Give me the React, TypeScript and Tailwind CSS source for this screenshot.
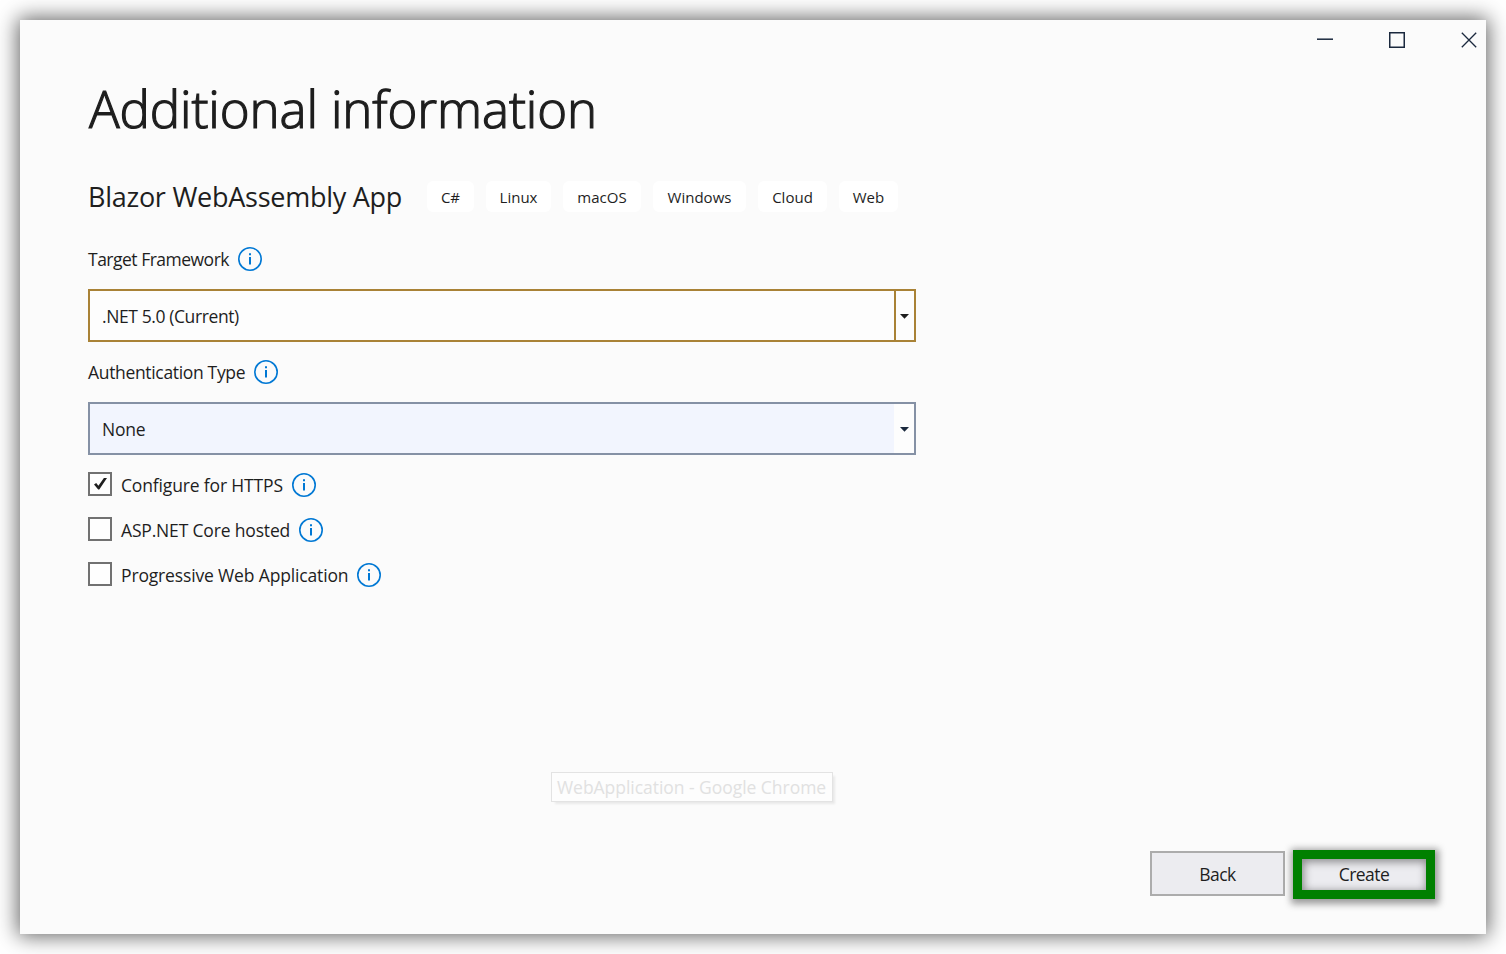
import type { ReactNode } from 'react';

function InfoIcon() {
  return (
    <svg className="size-6 shrink-0" viewBox="0 0 24 24" fill="none">
      <circle cx="12" cy="12" r="11.2" stroke="#0078d4" strokeWidth="1.6" />
      <path d="M11 6.3h2v2h-2zM11 10h2v7.6h-2z" fill="#0078d4" />
    </svg>
  );
}

function Caret({ className }: { className: string }) {
  return (
    <svg className="h-[5px] w-[9px]" viewBox="0 0 9 5">
      <path d="M0 0h9L4.5 4.7z" className={className} />
    </svg>
  );
}

function Label({ width, children }: { width: string; children: ReactNode }) {
  return (
    <div className="flex h-6 items-center gap-[9px]">
      <span className={width}>{children}</span>
      <InfoIcon />
    </div>
  );
}

function CheckRow({ checked = false, width, children }: { checked?: boolean; width: string; children: ReactNode }) {
  return (
    <div className="flex h-[25px] gap-[9px]">
      <div className="flex size-6 items-center justify-center border-2 border-[#717171] bg-[#fefefe]">
        {checked && (
          <svg className="size-5 shrink-0" viewBox="0 0 20 20">
            <path d="M4 10.6l2.2-1.6 2.2 2.8L13.9 4H17L9.3 15.6H8.2z" fill="#1e1e1e" />
          </svg>
        )}
      </div>
      <div className="pt-px">
        <Label width={width}>{children}</Label>
      </div>
    </div>
  );
}

const tags = [
  { name: 'C#', width: 'w-[47px]' },
  { name: 'Linux', width: 'w-[65px]' },
  { name: 'macOS', width: 'w-[78px]' },
  { name: 'Windows', width: 'w-[93px]' },
  { name: 'Cloud', width: 'w-[69px]' },
  { name: 'Web', width: 'w-[59px]' },
];

export default function App() {
  return (
    <div className="h-[954px] w-full overflow-hidden bg-white p-5 font-['Open_Sans','Noto_Sans',sans-serif] text-[17.5px] leading-6 whitespace-nowrap text-[#1e1e1e]">
      <div className="relative flex h-[914px] w-[1466px] flex-col bg-[#fbfbfb] shadow-[0_0_20px_2px_rgba(0,0,0,0.62)]">
        <div className="flex h-10 items-center justify-end gap-14 pr-[9px]">
          <svg className="h-4 w-4" viewBox="0 0 16 16">
            <path d="M0 7.2h16" stroke="#1b293e" strokeWidth="1.5" />
          </svg>
          <svg className="h-4 w-4" viewBox="0 0 16 16" fill="none">
            <path d="M.75.75h14.5v14.5H.75z" stroke="#1b293e" strokeWidth="1.5" />
          </svg>
          <svg className="h-4 w-4" viewBox="0 0 16 16">
            <path d="M.8.8l14.4 14.4M15.2.8L.8 15.2" stroke="#1b293e" strokeWidth="1.3" />
          </svg>
        </div>

        <main className="flex flex-col pt-[18px] pl-[68px]">
          <h1 className="h-[60px] pl-px text-[51px] leading-[60px] font-light tracking-[-0.12px] [-webkit-text-stroke:1.2px_#1e1e1e]">
            Additional information
          </h1>

          <div className="mt-[43px] flex h-[31px] items-center">
            <h2 className="w-[339px] text-[27px] leading-[31px] tracking-[-0.26px]">Blazor WebAssembly App</h2>
            <ul className="flex gap-3">
              {tags.map((t) => (
                <li key={t.name} className={`flex h-[31px] items-center justify-center rounded-md bg-white text-[15px] ${t.width}`}>
                  {t.name}
                </li>
              ))}
            </ul>
          </div>

          <div className="mt-[35px]">
            <Label width="w-[141px] tracking-[-0.5px]">Target Framework</Label>
          </div>
          <div className="mt-[18px] flex h-[53px] w-[828px] border-2 border-[#a98236] bg-[#fdfdfd]">
            <div className="flex flex-1 items-center pl-3 tracking-[-0.4px]">.NET 5.0 (Current)</div>
            <div className="flex w-5 items-center justify-center border-l-2 border-[#a98236] pt-0.5 pr-px">
              <Caret className="fill-[#1e1e1e]" />
            </div>
          </div>

          <div className="mt-[18px]">
            <Label width="w-[157px] tracking-[-0.33px]">Authentication Type</Label>
          </div>
          <div className="mt-[18px] flex h-[53px] w-[828px] border-2 border-[#8591a5] bg-[#fdfdfd]">
            <div className="flex flex-1 items-center bg-[#f2f5fe] pl-3 tracking-[-0.25px]">None</div>
            <div className="flex w-5 items-center justify-center pt-0.5 pl-px">
              <Caret className="fill-[#1b293e]" />
            </div>
          </div>

          <div className="mt-[17px] flex flex-col gap-5">
            <CheckRow checked width="w-[162px] tracking-[-0.15px]">Configure for HTTPS</CheckRow>
            <CheckRow width="w-[169px] tracking-[-0.17px]">ASP.NET Core hosted</CheckRow>
            <CheckRow width="w-[227px] tracking-[-0.15px]">Progressive Web Application</CheckRow>
          </div>
        </main>

        <div className="absolute top-[752px] left-[531px] flex h-[30px] w-[282px] items-center border border-[#e3e3e3] bg-[#fdfdfd] pl-[5px] tracking-[-0.04px] text-[#e1e1e1] shadow-[3px_3px_2px_-1px_#e9e9e9]">
          WebApplication - Google Chrome
        </div>

        <footer className="mt-auto mr-[51px] mb-[35px] flex items-start justify-end gap-2">
          <button className="mt-px h-[45px] w-[135px] border-2 border-[#acacac] bg-[#ececf0] pt-px tracking-[-0.5px]">Back</button>
          <button className="h-[49px] w-[142px] border-9 border-[#008000] bg-[#ececf0] pb-0.5 tracking-[-0.55px] shadow-[1px_2px_7px_3px_rgba(0,0,0,0.38),inset_1px_2px_8px_1px_rgba(0,0,0,0.42)]">
            Create
          </button>
        </footer>
      </div>
    </div>
  );
}
